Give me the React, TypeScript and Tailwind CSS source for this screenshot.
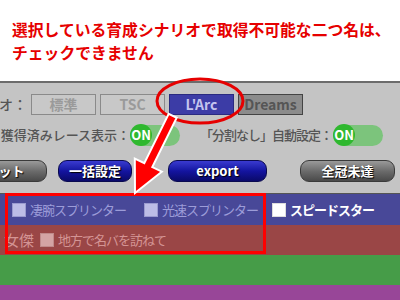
const JP = "font-['Noto_Sans_CJK_JP','Noto_Sans',sans-serif]";

function ScenarioButton({ label, state }: { label: string; state: "off" | "on" | "dim" }) {
  const cls =
    state === "on"
      ? "bg-[#3c3ca6] text-[#c4c4ee] border-[#2a2a80]"
      : state === "dim"
      ? "bg-[#8c8c8c] text-[#555] border-[#444]"
      : "bg-[#c8c8c8] text-[#9a9a9a] border-[#8a8a8a]";
  return (
    <div className={`flex h-[21px] w-[65px] items-center justify-center border text-[14px] font-bold ${cls}`}>
      {label}
    </div>
  );
}

function Toggle() {
  return (
    <div className="relative flex h-[21px] w-[50px] shrink-0 items-center rounded-full bg-[#7cc47c]">
      <div className="flex h-[22px] w-[22px] items-center justify-center rounded-full bg-[#2fb82f] text-[13px] font-bold tracking-normal text-white">
        ON
      </div>
    </div>
  );
}

function PillButton({ label, tone, width }: { label: string; tone: "blue" | "gray"; width: string }) {
  const cls =
    tone === "blue"
      ? "bg-gradient-to-b from-[#3a3ad0] via-[#1414a0] to-[#0a0a6a] border-[#0a0a50]"
      : "bg-gradient-to-b from-[#9a9a9a] via-[#6c6c6c] to-[#4a4a4a] border-[#3a3a3a]";
  return (
    <div
      className={`flex h-[22px] ${width} shrink-0 items-center justify-center rounded-[9px] border text-[13px] font-bold text-white [text-shadow:1px_1px_1px_#000] ${cls}`}
    >
      {label}
    </div>
  );
}

function Check({ label, tone }: { label: string; tone: "blue" | "red" | "white" }) {
  const box =
    tone === "white" ? "bg-white border-[#ddd]" : tone === "blue" ? "bg-[#bcbce6] border-[#9a9ad0]" : "bg-[#d4a4a4] border-[#c08a8a]";
  const txt = tone === "white" ? "text-white font-bold" : tone === "blue" ? "text-[#9c9cd8]" : "text-[#d49494]";
  return (
    <div className="flex shrink-0 items-center gap-[4px] whitespace-nowrap">
      <div className={`h-[14px] w-[14px] shrink-0 border ${box}`} />
      <span className={`text-[13px] tracking-[-1px] ${txt}`}>{label}</span>
    </div>
  );
}

export default function App() {
  return (
    <div className={`relative h-[300px] w-[400px] overflow-hidden bg-white ${JP}`}>
      <div className="flex h-[81px] flex-col pl-[12px] pt-[18px] text-[15.8px] font-bold leading-[23px] text-[#e60000]">
        <p className="whitespace-nowrap">選択している育成シナリオで取得不可能な二つ名は、</p>
        <p>チェックできません</p>
      </div>

      <div className="flex h-[112px] flex-col border-t-2 border-[#6c6c6c] bg-[#c4c4c4] text-[#555]">
        <div className="mt-[10px] flex h-[22px] items-center">
          <div className="flex w-[27px] shrink-0 justify-end whitespace-nowrap text-[14px] font-medium">シナリオ：</div>
          <div className="ml-[4px] flex gap-[4px]">
            <ScenarioButton label="標準" state="off" />
            <ScenarioButton label="TSC" state="off" />
            <ScenarioButton label="L'Arc" state="on" />
            <ScenarioButton label="Dreams" state="dim" />
          </div>
        </div>
        <div className="mt-[9px] flex h-[22px] items-center text-[13px] font-medium">
          <div className="flex w-[130px] shrink-0 justify-end whitespace-nowrap">レース獲得済みレース表示：</div>
          <Toggle />
          <div className="ml-[20px] w-[133px] shrink-0 whitespace-nowrap tracking-[-1px]">「分割なし」自動設定：</div>
          <Toggle />
        </div>
        <div className="mt-[14px] flex items-center">
          <div className="ml-[-50px]">
            <PillButton label="リセット" tone="gray" width="w-[97px]" />
          </div>
          <div className="ml-[11px]">
            <PillButton label="一括設定" tone="blue" width="w-[74px]" />
          </div>
          <div className="ml-[36px]">
            <PillButton label="export" tone="blue" width="w-[99px]" />
          </div>
          <div className="ml-[33px]">
            <PillButton label="全冠未達" tone="gray" width="w-[95px]" />
          </div>
        </div>
      </div>

      <div className="flex h-[32px] items-center border-t border-[#555] bg-[#484898] pl-[12px]">
        <Check label="凄腕スプリンター" tone="blue" />
        <div className="ml-[18px]">
          <Check label="光速スプリンター" tone="blue" />
        </div>
        <div className="ml-[14px]">
          <Check label="スピードスター" tone="white" />
        </div>
      </div>
      <div className="flex h-[30px] items-center bg-[#9a4646]">
        <div className="flex w-[34px] shrink-0 justify-end whitespace-nowrap text-[15px] text-[#d49494]">女傑</div>
        <div className="ml-[6px]">
          <Check label="地方で名バを訪ねて" tone="red" />
        </div>
      </div>
      <div className="h-[30px] bg-[#469c48]" />
      <div className="h-[15px] bg-[#984698]" />

      <svg className="pointer-events-none absolute left-0 top-0" width="400" height="300" viewBox="0 0 400 300">
        <ellipse cx="200" cy="101" rx="43" ry="22" fill="none" stroke="#e60000" strokeWidth="3" />
        <rect x="6.5" y="194.5" width="258" height="58" fill="none" stroke="#ff0000" strokeWidth="3" />
        <polygon
          points="135,193 161.8,171.7 152.3,167.1 176.7,117.8 168.7,113.8 144.3,163.1 134.8,158.5"
          fill="#ff0000"
          stroke="#ffffff"
          strokeWidth="2"
          strokeLinejoin="miter"
        />
      </svg>
    </div>
  );
}
